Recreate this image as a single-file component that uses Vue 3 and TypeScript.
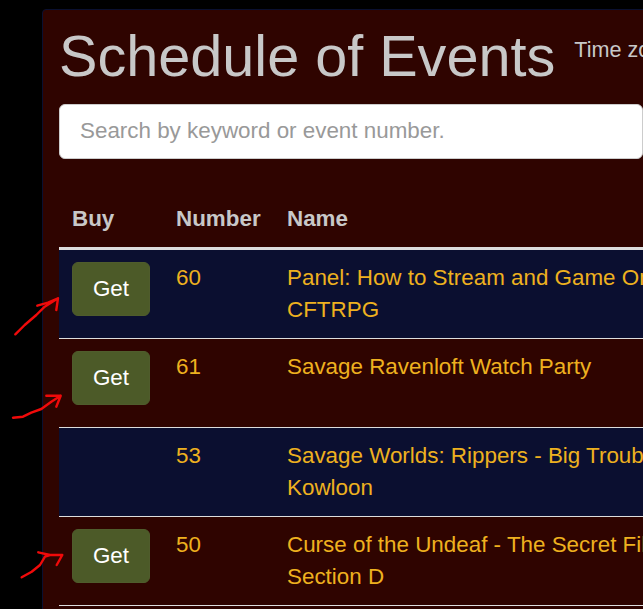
<template>
  <div class="page">
    <main class="panel">
      <header class="title-row">
        <h1>Schedule of Events</h1>
        <span class="zone">Time zone: America/New_York</span>
      </header>
      <input class="search" type="text" placeholder="Search by keyword or event number." />
      <table class="events">
        <thead>
          <tr>
            <th class="col-buy">Buy</th>
            <th class="col-number">Number</th>
            <th class="col-name">Name</th>
          </tr>
        </thead>
        <tbody>
          <tr v-for="row in rows" :key="row.number">
            <td><button v-if="row.canBuy" class="get" type="button">Get</button></td>
            <td>{{ row.number }}</td>
            <td>{{ row.name }}</td>
          </tr>
        </tbody>
      </table>
    </main>

    <!-- hand-drawn annotations on top of the page -->
    <svg class="marks" width="643" height="609" viewBox="0 0 643 609" fill="none">
      <path d="M15.3 334.3 L24.7 325 L36.3 315 L44.7 306.7 L58 298.3 M37.3 305.7 L48 302.7 L58 298.3 L56.3 310" />
      <path d="M13 417.7 L23 416.7 L31.3 412.7 L41.3 409 L51.3 401.7 L60.7 395.7 M46.3 395.7 L60.7 395.7 L56.3 406.7" />
      <path d="M21.7 577.3 L31.7 571.7 L40 565 L45 556.7 L50 555 L62.3 555 L56.7 565 M38.3 552.3 L50 555" />
    </svg>
  </div>
</template>

<script setup lang="ts">
interface EventRow {
  number: number
  name: string
  canBuy: boolean
}

const rows: EventRow[] = [
  { number: 60, name: 'Panel: How to Stream and Game Online CFTRPG', canBuy: true },
  { number: 61, name: 'Savage Ravenloft Watch Party', canBuy: true },
  { number: 53, name: 'Savage Worlds: Rippers - Big Trouble in Old Kowloon', canBuy: false },
  { number: 50, name: 'Curse of the Undeaf - The Secret Files of Section D', canBuy: true },
]
</script>

<style>
html,
body {
  margin: 0;
  background: #000;
  overflow: hidden;
}
</style>

<style scoped>
.page {
  position: relative;
  width: 643px;
  height: 609px;
  overflow: hidden;
  background: #000;
  font-family: "Liberation Sans", Arial, sans-serif;
}

.panel {
  box-sizing: border-box;
  width: 900px;
  min-height: 640px;
  margin: 9px 0 0 42px;
  padding: 0 16px;
  background: #2f0400;
  border: 1px solid #0a1030;
  border-radius: 4px;
}

.title-row {
  display: flex;
  align-items: flex-start;
  gap: 19px;
  height: 94px;
}

h1 {
  margin: 11px 0 0;
  font-size: 57.6px;
  line-height: 70px;
  font-weight: 400;
  color: #c8c8c8;
  white-space: nowrap;
}

.zone {
  margin-top: 26px;
  font-size: 21.6px;
  line-height: 28px;
  color: #c8c8c8;
  white-space: nowrap;
}

.search {
  display: block;
  box-sizing: border-box;
  width: 584px;
  height: 55px;
  padding: 0 20px 2px;
  background: #fff;
  border: 1px solid #ccc;
  border-radius: 6px;
  font-family: inherit;
  font-size: 22.4px;
  outline: none;
}

.search::placeholder {
  color: #999;
  opacity: 1;
}

.events {
  width: 680px;
  margin-top: 28px;
  border-collapse: collapse;
  table-layout: fixed;
  font-size: 22.4px;
  line-height: 32px;
  color: #eeb11f;
}

.col-buy {
  width: 78px;
}

.col-number {
  width: 85px;
}

th {
  padding: 16px 13px 12px;
  text-align: left;
  font-weight: 700;
  color: #c8c8c8;
  border-bottom: 3px solid #ddd;
}

td {
  padding: 12px 13px 0;
  height: 76px;
  vertical-align: top;
  border-bottom: 1px solid #ddd;
}

tbody tr:nth-child(odd) {
  background: #0b0f30;
}

.get {
  display: block;
  width: 78px;
  height: 54px;
  padding: 0;
  background: #4c5a28;
  border: 1px solid #4f5c2c;
  border-radius: 6px;
  color: #fff;
  font-family: inherit;
  font-size: 22.4px;
}

.marks {
  position: absolute;
  top: 0;
  left: 0;
  pointer-events: none;
}

.marks path {
  stroke: #f00a0a;
  stroke-width: 2.4;
  stroke-linecap: round;
  stroke-linejoin: round;
}
</style>
